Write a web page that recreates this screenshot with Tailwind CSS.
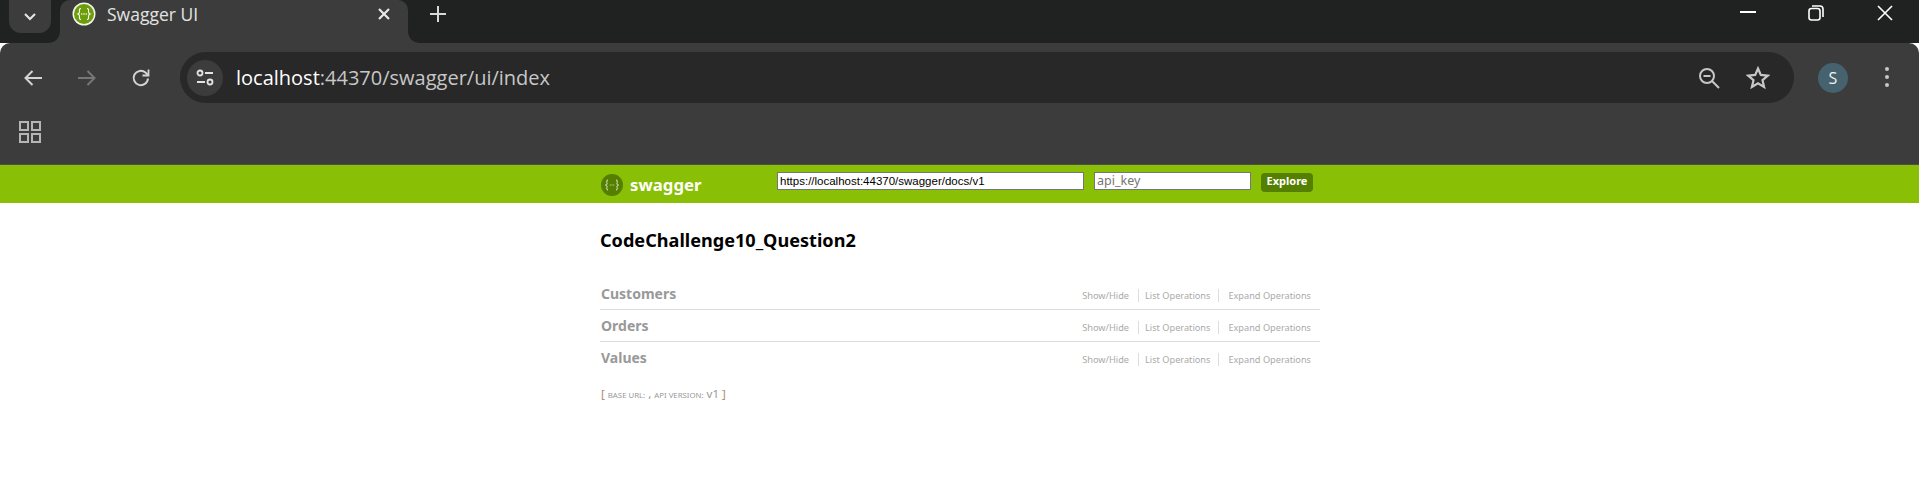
<!DOCTYPE html>
<html lang="en">
<head>
  <meta charset="UTF-8" />
  <title>Swagger UI</title>
  <script src="https://cdn.jsdelivr.net/npm/@tailwindcss/browser@4"></script>
</head>
<body class="bg-white h-[498px] overflow-hidden font-['Open_Sans',sans-serif]">

  <!-- Tab strip -->
  <div class="h-[43px] bg-[#202222] flex items-start">
    <div class="ml-[9px] w-[42px] h-[33px] rounded-b-[12px] bg-[#3c3c3c] flex items-center justify-center">
      <svg width="14" height="10" viewBox="0 0 14 10" fill="none" stroke="#e3e3e3" stroke-width="2.2"><path d="M2 2l5 5 5-5" /></svg>
    </div>
    <div class="relative ml-[9px] w-[348px] h-[43px] rounded-t-[10px] bg-[#3c3c3c] flex items-start pl-[12px] pt-[2px]">
      <svg class="absolute left-[-12px] bottom-0" width="12" height="12" viewBox="0 0 12 12"><path d="M12 0v12H0c7 0 12-5 12-12z" fill="#3c3c3c" /></svg>
      <svg class="absolute right-[-12px] bottom-0" width="12" height="12" viewBox="0 0 12 12"><path d="M0 0v12h12C5 12 0 7 0 0z" fill="#3c3c3c" /></svg>
      <svg width="24" height="24" viewBox="0 0 24 24" fill="none">
        <circle cx="12" cy="12" r="11.5" fill="#f4f7ec" />
        <circle cx="12" cy="12" r="10" fill="#6b9e0a" />
        <path d="M9 6.5c-2 0-1.500 1.500-1.500 3S7.500 11.500 6 12c1.500.5 1.500 1 1.500 2.500s-.5 3 1.500 3M15 6.500c2 0 1.500 1.500 1.500 3s0 2 1.500 2.500c-1.500.5-1.500 1-1.500 2.500s.5 3-1.500 3" stroke="#fff" stroke-width="1.100" />
        <circle cx="9.800" cy="12" r=".8" fill="#fff" /><circle cx="12" cy="12" r=".8" fill="#fff" /><circle cx="14.200" cy="12" r=".8" fill="#fff" />
      </svg>
      <span class="ml-[11px] text-[17.500px] leading-[24px] text-[#e3e3e3]">Swagger UI</span>
      <svg class="ml-auto mr-[17px] mt-[5px]" width="14" height="14" viewBox="0 0 14 14" stroke="#e8e8e8" stroke-width="2.200"><path d="M2 2l10 10M12 2L2 12" /></svg>
    </div>
    <svg class="ml-[21px] mt-[5px]" width="18" height="18" viewBox="0 0 18 18" stroke="#d8d8d8" stroke-width="2"><path d="M9 1v16M1 9h16" /></svg>
    <div class="ml-auto flex h-[26px] items-center">
      <svg width="16" height="2" viewBox="0 0 16 2" class="mb-[2px]"><path d="M0 1h16" stroke="#fff" stroke-width="2" /></svg>
      <svg class="ml-[52px]" width="16" height="16" viewBox="0 0 16 16" fill="none" stroke="#fff" stroke-width="1.600"><rect x="1" y="3.500" width="11" height="11.500" rx="2.500" /><path d="M4 1h8c2 0 3 1 3 3v8" /></svg>
      <svg class="ml-[53px] mr-[26px]" width="16" height="16" viewBox="0 0 16 16" stroke="#fff" stroke-width="1.600"><path d="M1 1l14 14M15 1L1 15" /></svg>
    </div>
  </div>

  <!-- Toolbar -->
  <div class="h-[122px] bg-[#3c3c3c] rounded-t-[10px] border-b border-[#4d4d4d] pt-[9px]">
    <div class="flex items-center h-[51px]">
      <svg class="ml-[23px]" width="20" height="18" viewBox="0 0 20 18" fill="none" stroke="#d4d4d4" stroke-width="2"><path d="M19 9H3M9.500 2L2.500 9l7 7" /></svg>
      <svg class="ml-[34px]" width="20" height="18" viewBox="0 0 20 18" fill="none" stroke="#777" stroke-width="2"><path d="M1 9h16M10.500 2l7 7-7 7" /></svg>
      <svg class="ml-[34px]" width="20" height="20" viewBox="0 0 20 20" fill="none" stroke="#d4d4d4" stroke-width="2"><path d="M17 10.500A7.200 7.200 0 1 1 14.500 4.500L17 7" /><path d="M17.500 1.500V7.500H11.500" stroke-width="1.800" /></svg>
      <div class="ml-[29px] flex-1 h-[51px] mr-[125px] rounded-full bg-[#282828] flex items-center pl-[7px] pr-[24px]">
        <div class="w-[36px] h-[36px] rounded-full bg-[#3c3c3c] flex items-center justify-center">
          <svg width="20" height="20" viewBox="0 0 20 20" fill="none" stroke="#e3e3e3" stroke-width="1.800"><circle cx="5" cy="5" r="2.500" /><path d="M10 5h8M2 14h8" /><circle cx="15" cy="14" r="2.500" /></svg>
        </div>
        <span class="ml-[13px] text-[20px] text-[#c7c7c7]"><span class="text-white">localhost</span>:44370/swagger/ui/index</span>
        <svg class="ml-auto mr-[1px]" width="22" height="22" viewBox="0 0 22 22" fill="none" stroke="#c7c7c7" stroke-width="2"><circle cx="9" cy="9" r="7" /><path d="M5.500 9h7M14 14l7 7" /></svg>
        <svg class="ml-[25px]" width="24" height="24" viewBox="0 0 24 24" fill="none" stroke="#c7c7c7" stroke-width="2.200"><path d="M12 2.500l2.800 6.400 7 .7-5.300 4.600 1.600 6.800-6.100-3.600-6.100 3.600 1.600-6.800-5.300-4.600 7-.7z" /></svg>
      </div>
    </div>
    <div class="flex items-center mt-[18px]">
      <div class="ml-[19px] grid grid-cols-2 gap-[2px]">
        <div class="w-[10px] h-[10px] border-[2.500px] border-[#b5b5b5]"></div>
        <div class="w-[10px] h-[10px] border-[2.500px] border-[#b5b5b5]"></div>
        <div class="w-[10px] h-[10px] border-[2.500px] border-[#b5b5b5]"></div>
        <div class="w-[10px] h-[10px] border-[2.500px] border-[#b5b5b5]"></div>
      </div>
    </div>
  </div>

  <!-- Avatar and menu sit over the toolbar -->
  <div class="absolute left-[1818px] top-[63px] w-[30px] h-[30px] rounded-full bg-[#47626f] text-[#f0f0f0] text-[16px] flex items-center justify-center">S</div>
  <div class="absolute left-[1885px] top-[67px] flex flex-col gap-[4px]">
    <div class="w-[4px] h-[4px] rounded-full bg-[#c7c7c7]"></div>
    <div class="w-[4px] h-[4px] rounded-full bg-[#c7c7c7]"></div>
    <div class="w-[4px] h-[4px] rounded-full bg-[#c7c7c7]"></div>
  </div>

  <!-- Swagger header -->
  <div class="h-[38px] bg-[#89bf04] flex items-start pl-[601px] font-['Noto_Sans',sans-serif]">
    <div class="w-[22px] h-[22px] mt-[9px] rounded-full bg-[#547f00] flex items-center justify-center">
      <svg width="14" height="12" viewBox="0 0 14 12" fill="none" stroke="#e6efd2" stroke-width="1"><path d="M3 1C1 1 2 3 2 4.500S1.500 5.500 .5 6c1 .5 1.500.5 1.500 1.500S1 11 3 11M11 1c2 0 1 2 1 3.500s.5 1 1.500 1.500c-1 .5-1.500.5-1.500 1.500s1 3.500-1 3.500" /><path d="M4.800 6h.8M6.600 6h.8M8.400 6h.8" /></svg>
    </div>
    <span class="ml-[7px] mt-[5px] w-[72px] text-[16.800px] leading-[30px] font-bold text-white">swagger</span>
    <input value="https://localhost:44370/swagger/docs/v1" class="ml-[75px] mt-[7px] w-[307px] h-[18px] bg-white border border-[#767676] px-[2px] text-[11.500px] text-black font-['Liberation_Sans',sans-serif]" />
    <input placeholder="api_key" class="ml-[10px] mt-[7px] w-[157px] h-[18px] bg-white border border-[#767676] px-[2px] text-[12.500px] text-black placeholder:text-[#757575]" />
    <div class="ml-[10px] mt-[8px] w-[52px] h-[19px] rounded-[4px] bg-[#547f00] text-white text-[11px] font-bold leading-[16px] text-center">Explore</div>
  </div>

  <!-- Content -->
  <div class="w-[720px] ml-[600px] font-['Noto_Sans',sans-serif]">
    <h1 class="pt-[24px] text-[18.100px] leading-[26px] font-bold text-black">CodeChallenge10_Question2</h1>

    <div class="mt-[25px]">
      <div class="h-[32px] flex items-center justify-between border-b border-[#ddd]">
        <span class="text-[14px] font-bold text-[#999] pl-px">Customers</span>
        <div class="flex items-center text-[9.200px] text-[#aaa] pr-[9px] pt-[4px]">
          <span class="pr-[9px] border-r border-[#ddd]">Show/Hide</span><span class="pl-[6px] pr-[8px] border-r border-[#ddd]">List Operations</span><span class="pl-[9px]">Expand Operations</span>
        </div>
      </div>
      <div class="h-[32px] flex items-center justify-between border-b border-[#ddd]">
        <span class="text-[14px] font-bold text-[#999] pl-px">Orders</span>
        <div class="flex items-center text-[9.200px] text-[#aaa] pr-[9px] pt-[4px]">
          <span class="pr-[9px] border-r border-[#ddd]">Show/Hide</span><span class="pl-[6px] pr-[8px] border-r border-[#ddd]">List Operations</span><span class="pl-[9px]">Expand Operations</span>
        </div>
      </div>
      <div class="h-[31px] flex items-center justify-between">
        <span class="text-[14px] font-bold text-[#999] pl-px">Values</span>
        <div class="flex items-center text-[9.200px] text-[#aaa] pr-[9px] pt-[4px]">
          <span class="pr-[9px] border-r border-[#ddd]">Show/Hide</span><span class="pl-[6px] pr-[8px] border-r border-[#ddd]">List Operations</span><span class="pl-[9px]">Expand Operations</span>
        </div>
      </div>
    </div>

    <p class="mt-[12px] pl-px text-[11.500px] leading-[18px] text-[#999]"><span class="text-[#b08a70]">[</span> <span class="text-[7.800px] uppercase">base url:</span> , <span class="text-[7.800px] uppercase">api version:</span> v1 <span class="text-[#b08a70]">]</span></p>
  </div>
</body>
</html>
